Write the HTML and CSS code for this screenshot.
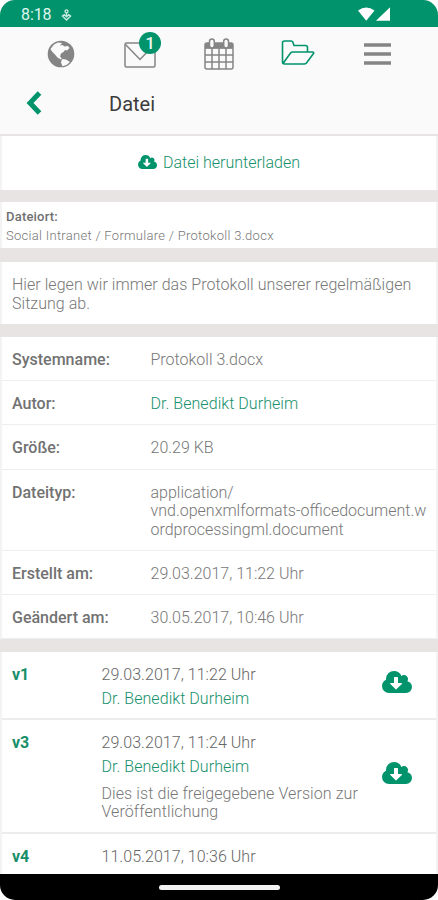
FILE: index.html
```html
<!DOCTYPE html>
<html lang="de">
<head>
<meta charset="utf-8">
<title>Datei</title>
<link rel="stylesheet" href="styles.css">
</head>
<body>
<svg class="defs" aria-hidden="true">
  <symbol id="cloud" viewBox="0 128 1920 1408" preserveAspectRatio="none"><path d="M1280 928q0-14-9-23t-23-9h-224v-352q0-13-9.500-22.500t-22.500-9.500h-192q-13 0-22.500 9.500t-9.500 22.500v352h-224q-13 0-22.500 9.500t-9.500 22.500q0 14 9 23l352 352q9 9 23 9t23-9l351-351q10-12 10-24zm640 224q0 159-112.500 271.500t-271.500 112.500h-1088q-185 0-316.500-131.500t-131.500-316.500q0-130 70-240t188-165q-2-30-2-43 0-212 150-362t362-150q156 0 285.500 87t188.500 231q71-62 166-62 106 0 181 75t75 181q0 76-41 138 130 31 213.500 135.500t83.500 238.500z"/></symbol>
</svg>
<div class="screen">
  <header class="status">
    <span class="clock">8:18</span>
    <svg class="debug" viewBox="0 0 12 14"><circle cx="6" cy="2.500" r="1.600"/><path d="M6 4v4M1.500 7.500 6 12l4.500-4.500L8.500 6 6 8.500 3.500 6z"/></svg>
    <svg class="signal" viewBox="0 0 34 15"><path d="M0 3.500Q8.500-3 17 3.500L8.500 14zM33 0v14H18.500z"/></svg>
  </header>
  <nav class="tabs">
    <svg class="tab" viewBox="0 0 28 28"><circle cx="14" cy="14" r="13.300" fill="#858585"/><path fill="#fafafa" d="M3.500 9 7 4.500 11 2.500l4 .5-2 2.500 2.500-.5 2 1.500 3.500-.5 1.500 2-2.500 2.500-2-.5-1.500 2-2.500 1.500-1 3 1.500 1.500-.5 1.500-3.500-2-3-3.500-2.500-2.500zM15 19l4 .5 4 2.500-3.500 3-4 1.300-1.500-3.800z"/></svg>
    <div class="tab mail">
      <svg viewBox="0 0 32 26"><rect x="1" y="1" width="30" height="24" rx="1.500"/><path d="m1.500 2.500 14.500 15 14.500-15"/></svg>
      <span class="badge">1</span>
    </div>
    <svg class="tab calendar" viewBox="0 0 30 32"><rect x="1" y="5" width="28" height="26" rx="2"/><path class="band" d="M1 5h28v5.500H1z"/><path d="M1 10h28M1 17h28M1 24h28M8 10v21M15 10v21M22 10v21"/><rect class="ring" x="5.500" y="1" width="4.800" height="9" rx="2.400"/><rect class="ring" x="19.700" y="1" width="4.800" height="9" rx="2.400"/></svg>
    <svg class="tab folder" viewBox="0 0 34 25"><path d="M1.500 22V3q0-2 2-2h6.500q1.500 0 2 1.500l1 3h11.500q2 0 2 2V12M1.500 22q0 2 2 2H23q1.500 0 2.500-1l7-9.500q.8-1.500-1.500-1.500H12q-1.500 0-2.500 1L2 23.500"/></svg>
    <svg class="tab menu" viewBox="0 0 27 22"><path d="M0 2h27M0 11h27M0 20h27"/></svg>
  </nav>
  <div class="titlebar">
    <svg class="back" viewBox="0 0 16 24"><path d="M13.500 2 4 12l9.500 10"/></svg>
    <h1>Datei</h1>
  </div>
  <main>
    <section class="card download"><svg><use href="#cloud"/></svg><span>Datei herunterladen</span></section>
    <section class="card location"><b>Dateiort:</b><span>Social Intranet / Formulare / Protokoll 3.docx</span></section>
    <section class="card description">Hier legen wir immer das Protokoll unserer regelmäßigen<br>Sitzung ab.</section>
    <dl class="card details">
      <div><dt>Systemname:</dt><dd>Protokoll 3.docx</dd></div>
      <div><dt>Autor:</dt><dd class="person">Dr. Benedikt Durheim</dd></div>
      <div><dt>Größe:</dt><dd>20.29 KB</dd></div>
      <div class="type"><dt>Dateityp:</dt><dd>application/<br>vnd.openxmlformats-officedocument.w<br>ordprocessingml.document</dd></div>
      <div><dt>Erstellt am:</dt><dd>29.03.2017, 11:22 Uhr</dd></div>
      <div><dt>Geändert am:</dt><dd>30.05.2017, 10:46 Uhr</dd></div>
    </dl>
    <section class="card versions">
      <article class="v1"><b>v1</b><div><time>29.03.2017, 11:22 Uhr</time><p class="person">Dr. Benedikt Durheim</p></div><svg><use href="#cloud"/></svg></article>
      <article class="v3"><b>v3</b><div><time>29.03.2017, 11:24 Uhr</time><p class="person">Dr. Benedikt Durheim</p><p class="note">Dies ist die freigegebene Version zur<br>Veröffentlichung</p></div><svg><use href="#cloud"/></svg></article>
      <article class="v4"><b>v4</b><div><time>11.05.2017, 10:36 Uhr</time></div></article>
    </section>
  </main>
  <footer><i></i></footer>
</div>
</body>
</html>
```
FILE: styles.css
```css
* { box-sizing: border-box; margin: 0; padding: 0; }
body { background: #fff; font: 300 16px/18.700px Roboto, sans-serif; color: #777; }
.defs { position: absolute; width: 0; height: 0; }
.screen { width: 438px; height: 900px; display: flex; flex-direction: column; overflow: hidden; border-radius: 15px; background: #fafafa; white-space: nowrap; }
svg { display: block; flex: none; }
.status { height: 27px; flex: none; display: flex; align-items: center; padding: 3px 47px 0 21px; background: #01936b; color: #dff5ee; font-weight: 400; }
.clock { width: 30px; font-size: 16px; letter-spacing: -.1px; }
.debug { width: 11px; height: 13px; margin-left: 10px; fill: none; stroke: #c8ebdf; stroke-width: 1.500; }
.signal { width: 33px; height: 15px; margin-left: auto; margin-top: -1px; fill: #fff; }
.tabs { height: 53px; flex: none; display: flex; align-items: center; padding-left: 47px; fill: none; stroke: #858585; }
.tab { width: 28px; height: 28px; stroke-width: 1.500; }
.tabs > svg:first-child { stroke: none; }
.tab.mail { position: relative; width: 32px; height: 26px; margin-left: 49px; margin-top: 3px; }
.mail svg { width: 32px; height: 26px; }
.badge { position: absolute; left: 15px; top: -10px; width: 22px; height: 22px; border-radius: 50%; background: #01936b; color: #e9f8f2; font-size: 17px; font-weight: 500; line-height: 23px; text-align: center; }
.tab.calendar { width: 30px; height: 32px; margin-left: 48px; }
.band { fill: #858585; stroke: none; }
.ring { fill: #fafafa; }
.tab.folder { width: 34px; height: 25px; margin-left: 47px; margin-top: -2px; stroke: #01936b; stroke-width: 1.600; }
.tab.menu { width: 27px; height: 22px; margin-left: 49px; stroke-width: 3.600; }
.titlebar { height: 54px; flex: none; display: flex; align-items: center; padding: 0 0 6px 26px; }
.back { width: 16px; height: 24px; margin-top: -2px; fill: none; stroke: #01936b; stroke-width: 5; }
h1 { margin-left: 67px; font-size: 20px; font-weight: 400; line-height: 24px; color: #3c3c3c; }
main { flex: 1; min-height: 0; overflow: hidden; display: flex; flex-direction: column; gap: 13px; padding-top: 2px; background: #e7e4e3; }
.card { flex: none; background: #fff; border: solid #f3f3f3; border-width: 0 2px; }
.download { height: 54px; display: flex; align-items: center; justify-content: center; gap: 6px; color: #16906b; }
.download svg { width: 19px; height: 14px; margin-top: -2px; fill: #01936b; }
.location { height: 46px; margin-top: -1px; padding: 5px 5px 0 4px; font-size: 13px; line-height: 19px; letter-spacing: .290px; }
.location b, .location span { display: block; }
.location b { color: #707070; font-weight: 500; letter-spacing: .2px; }
.description { height: 62px; margin-top: 1px; padding: 14px 10px; letter-spacing: .045px; }
.details { height: 302px; }
.details > div { height: 44.200px; display: flex; padding: 14px 10px 0; border-bottom: 1px solid #eee; }
.details > .type { height: 81px; }
dt { width: 138.500px; flex: none; color: #727272; font-weight: 500; }
.person { color: #16906b; letter-spacing: .05px; }
article { display: flex; align-items: center; padding: 0 24px 0 10px; border-bottom: 2px solid #ececec; }
article > b { width: 89.500px; align-self: flex-start; padding-top: 14px; font-weight: 700; color: #188f6a; }
article > div { align-self: flex-start; padding-top: 14px; }
article svg { width: 30px; height: 22px; margin-left: auto; margin-top: -6px; fill: #01936b; }
time { display: block; color: #666; letter-spacing: .05px; }
article p { margin-top: 5.300px; }
article .note { margin-top: 8px; letter-spacing: .09px; }
.v1 { height: 68px; }
.v3 { height: 114px; }
.v4 { height: 68px; }
footer { height: 26px; flex: none; display: flex; justify-content: center; align-items: center; background: #000; }
footer i { width: 121px; height: 5px; border-radius: 3px; background: #f2f2f2; }
```
